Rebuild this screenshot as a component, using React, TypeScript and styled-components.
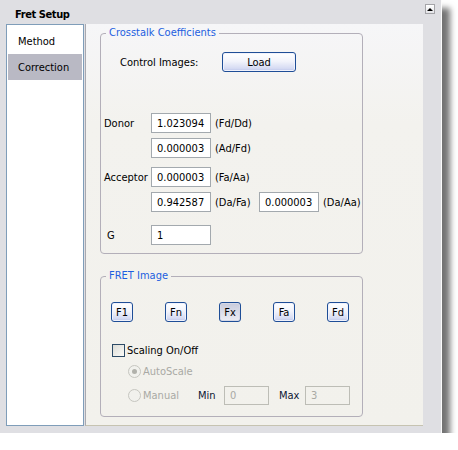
import React from 'react'
import styled, { createGlobalStyle } from 'styled-components'

const GlobalStyle = createGlobalStyle`
  body {
    margin: 0;
    background: #ffffff;
    font-family: "DejaVu Sans Condensed", "Liberation Sans", sans-serif;
    font-size: 11px;
    color: #000;
  }
`

const Window = styled.div`
  width: 441px;
  height: 433px;
  background: #dfdfe3;
  border-right: 1px solid #fbfbfb;
  box-shadow: 8px 8px 6px rgba(0, 0, 0, 0.55);
  display: flex;
  flex-direction: column;
`

const TitleBar = styled.div`
  height: 24px;
  display: flex;
  justify-content: space-between;
  padding: 0 6px 0 15px;
  box-sizing: border-box;
`

const Title = styled.div`
  font-weight: bold;
  font-size: 11px;
  letter-spacing: -0.4px;
  margin-top: 8px;
`

const CollapseButton = styled.div`
  width: 10px;
  height: 10px;
  box-sizing: border-box;
  border: 1px solid #a4a4a8;
  background: linear-gradient(#ffffff, #e4e4e8);
  display: flex;
  align-items: center;
  justify-content: center;
  margin-top: 4px;

  &::after {
    content: '';
    border-left: 3px solid transparent;
    border-right: 3px solid transparent;
    border-bottom: 3px solid #000;
  }
`

const Body = styled.div`
  flex: 1;
  display: flex;
  padding: 0 18px 7px 6px;
  min-height: 0;
`

const Sidebar = styled.div`
  width: 78px;
  height: 402px;
  box-sizing: border-box;
  background: #fff;
  border: 1px solid #7f9db9;
  padding: 3px 1px;
  display: flex;
  flex-direction: column;
`

const NavItem = styled.div<{ $active?: boolean }>`
  height: 26px;
  display: flex;
  align-items: center;
  padding-left: 10px;
  background: ${p => (p.$active ? '#b9b9c4' : 'transparent')};
`

const Content = styled.div`
  margin-left: 1px;
  width: 338px;
  height: 402px;
  box-sizing: border-box;
  border-left: 1px solid #a9a9b0;
  border-bottom: 1px solid #c6c3b1;
  background: linear-gradient(#f6f6f8, #f3f2ee 25%, #f2f1ec);
  padding-top: 2px;
`

const Group = styled.fieldset<{ $gap?: number; $bottom: number }>`
  margin: ${p => p.$gap ?? 0}px 0 0 14px;
  width: 263px;
  box-sizing: border-box;
  border: 1px solid #b3afb9;
  border-radius: 4px;
  padding: 0 0 ${p => p.$bottom}px 0;
  min-inline-size: 0;
`

const Legend = styled.legend`
  color: #1d5fe0;
  line-height: 14px;
  padding: 0 3px;
  margin-left: 5px;
`

const Row = styled.div<{ $top: number; $indent?: number; $h?: number }>`
  display: flex;
  align-items: center;
  height: ${p => p.$h ?? 20}px;
  margin-top: ${p => p.$top}px;
  padding-left: ${p => p.$indent ?? 0}px;
`

const ControlLabel = styled.div`
  width: 102px;
`

const BlueButton = styled.button<{ $w: number; $pressed?: boolean }>`
  width: ${p => p.$w}px;
  height: 20px;
  padding: 0;
  font: inherit;
  color: #000;
  border: 1px solid #1f4e97;
  border-radius: 3px;
  background: ${p =>
    p.$pressed
      ? 'linear-gradient(#c7cadb, #e2e4ee 70%, #ecedf3)'
      : 'linear-gradient(#ffffff, #f3f4fb 45%, #d6dbf3 85%, #bcc4e9)'};
  box-shadow: inset 0 0 0 1px ${p => (p.$pressed ? '#d5d8e6' : '#f0f2fc')};
`

const RowLabel = styled.div<{ $indent: number }>`
  width: 50px;
  box-sizing: border-box;
  padding-left: ${p => p.$indent}px;
`

const ValueBox = styled.input<{ $w?: number; $disabled?: boolean }>`
  width: ${p => p.$w ?? 60}px;
  height: ${p => (p.$disabled ? 19 : 20)}px;
  box-sizing: border-box;
  border: 1px solid ${p => (p.$disabled ? '#bdbdb6' : '#a3a9ae')};
  background: ${p => (p.$disabled ? 'transparent' : '#fff')};
  color: ${p => (p.$disabled ? '#a9a9a4' : '#000')};
  font: inherit;
  padding: 0 0 0 5px;
  outline: none;
`

const Unit = styled.div<{ $w?: number }>`
  margin-left: 4px;
  width: ${p => (p.$w ? `${p.$w}px` : 'auto')};
`

const ButtonStrip = styled.div`
  display: flex;
  gap: 32px;
  padding-left: 10px;
  margin-top: 19px;
`

const CheckBox = styled.span`
  width: 13px;
  height: 13px;
  box-sizing: border-box;
  border: 1px solid #2c4a66;
  background: linear-gradient(135deg, #dcdcd6, #fbfbf9);
  margin-right: 2px;
`

const Radio = styled.span<{ $checked?: boolean }>`
  width: 13px;
  height: 13px;
  box-sizing: border-box;
  border-radius: 50%;
  border: 1px solid #c6c6c0;
  background: #f1f1ed;
  margin-right: 2px;
  display: flex;
  align-items: center;
  justify-content: center;

  &::after {
    content: '';
    width: 5px;
    height: 5px;
    border-radius: 50%;
    background: ${p => (p.$checked ? '#b1b1ab' : 'transparent')};
  }
`

const RadioOption = styled.div<{ $w?: number }>`
  display: flex;
  align-items: center;
  color: #a9a9a4;
  width: ${p => (p.$w ? `${p.$w}px` : 'auto')};
`

const RangeLabel = styled.div<{ $gap?: number }>`
  width: 26px;
  margin-left: ${p => p.$gap ?? 0}px;
  color: #0c1633;
`

const navItems = ['Method', 'Correction']
const fretButtons = ['F1', 'Fn', 'Fx', 'Fa', 'Fd']

export default function App() {
  return (
    <>
      <GlobalStyle />
      <Window>
        <TitleBar>
          <Title>Fret Setup</Title>
          <CollapseButton />
        </TitleBar>
        <Body>
          <Sidebar>
            {navItems.map(n => (
              <NavItem key={n} $active={n === 'Correction'}>{n}</NavItem>
            ))}
          </Sidebar>
          <Content>
            <Group $bottom={8}>
              <Legend>Crosstalk Coefficients</Legend>
              <Row $top={12} $indent={19}>
                <ControlLabel>Control Images:</ControlLabel>
                <BlueButton $w={74}>Load</BlueButton>
              </Row>
              <Row $top={41}>
                <RowLabel $indent={3}>Donor</RowLabel>
                <ValueBox readOnly value="1.023094" />
                <Unit>(Fd/Dd)</Unit>
              </Row>
              <Row $top={5}>
                <RowLabel $indent={3} />
                <ValueBox readOnly value="0.000003" />
                <Unit>(Ad/Fd)</Unit>
              </Row>
              <Row $top={9}>
                <RowLabel $indent={3}>Acceptor</RowLabel>
                <ValueBox readOnly value="0.000003" />
                <Unit>(Fa/Aa)</Unit>
              </Row>
              <Row $top={5}>
                <RowLabel $indent={3} />
                <ValueBox readOnly value="0.942587" />
                <Unit $w={44}>(Da/Fa)</Unit>
                <ValueBox readOnly value="0.000003" />
                <Unit>(Da/Aa)</Unit>
              </Row>
              <Row $top={13}>
                <RowLabel $indent={6}>G</RowLabel>
                <ValueBox readOnly value="1" />
              </Row>
            </Group>
            <Group $gap={15} $bottom={11}>
              <Legend>FRET Image</Legend>
              <ButtonStrip>
                {fretButtons.map(b => (
                  <BlueButton key={b} $w={22} $pressed={b === 'Fx'}>{b}</BlueButton>
                ))}
              </ButtonStrip>
              <Row $top={21} $indent={11} $h={14}>
                <CheckBox />
                Scaling On/Off
              </Row>
              <Row $top={8} $indent={27} $h={13}>
                <RadioOption>
                  <Radio $checked />
                  AutoScale
                </RadioOption>
              </Row>
              <Row $top={7} $indent={27}>
                <RadioOption $w={70}>
                  <Radio />
                  Manual
                </RadioOption>
                <RangeLabel>Min</RangeLabel>
                <ValueBox $w={45} $disabled readOnly value="0" />
                <RangeLabel $gap={10}>Max</RangeLabel>
                <ValueBox $w={45} $disabled readOnly value="3" />
              </Row>
            </Group>
          </Content>
        </Body>
      </Window>
    </>
  )
}
